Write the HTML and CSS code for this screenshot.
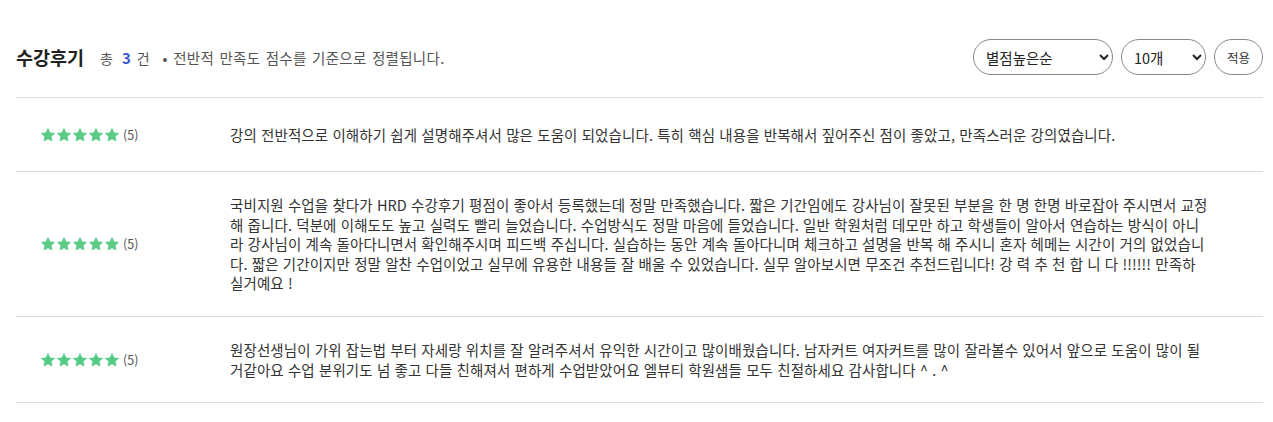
FILE: index.html
```html
<!DOCTYPE html>
<html lang="ko">
<head>
<meta charset="utf-8">
<link rel="stylesheet" href="styles.css">
</head>
<body>
<svg width="0" height="0" class="defs" aria-hidden="true">
  <defs>
    <symbol id="star" viewBox="0 0 24 24">
      <path d="M12 1.2l3.3 6.9 7.5 1-5.5 5.2 1.4 7.5L12 18.2l-6.7 3.6 1.4-7.5-5.5-5.2 7.5-1z"/>
    </symbol>
  </defs>
</svg>
<div class="review">
  <div class="review-head">
    <div class="head-left">
      <h2 class="title">수강후기</h2>
      <span class="count">총 <b>3</b> 건</span>
      <span class="note">• 전반적 만족도 점수를 기준으로 정렬됩니다.</span>
    </div>
    <div class="head-right">
      <select class="sel sel-sort"><option>별점높은순</option></select>
      <select class="sel sel-num"><option>10개</option></select>
      <button class="apply">적용</button>
    </div>
  </div>
  <ul class="list">
    <li class="item">
      <div class="score">
        <span class="stars"><svg><use href="#star"/></svg><svg><use href="#star"/></svg><svg><use href="#star"/></svg><svg><use href="#star"/></svg><svg><use href="#star"/></svg></span><span class="num">(5)</span>
      </div>
      <p class="text">강의 전반적으로 이해하기 쉽게 설명해주셔서 많은 도움이 되었습니다. 특히 핵심 내용을 반복해서 짚어주신 점이 좋았고, 만족스러운 강의였습니다.</p>
    </li>
    <li class="item">
      <div class="score">
        <span class="stars"><svg><use href="#star"/></svg><svg><use href="#star"/></svg><svg><use href="#star"/></svg><svg><use href="#star"/></svg><svg><use href="#star"/></svg></span><span class="num">(5)</span>
      </div>
      <p class="text">국비지원 수업을 찾다가 HRD 수강후기 평점이 좋아서 등록했는데 정말 만족했습니다. 짧은 기간임에도 강사님이 잘못된 부분을 한 명 한명 바로잡아 주시면서 교정 해 줍니다. 덕분에 이해도도 높고 실력도 빨리 늘었습니다. 수업방식도 정말 마음에 들었습니다. 일반 학원처럼 데모만 하고 학생들이 알아서 연습하는 방식이 아니라 강사님이 계속 돌아다니면서 확인해주시며 피드백 주십니다. 실습하는 동안 계속 돌아다니며 체크하고 설명을 반복 해 주시니 혼자 헤메는 시간이 거의 없었습니다. 짧은 기간이지만 정말 알찬 수업이었고 실무에 유용한 내용들 잘 배울 수 있었습니다. 실무 알아보시면 무조건 추천드립니다! 강 력 추 천 합 니 다 !!!!!! 만족하실거예요 !</p>
    </li>
    <li class="item">
      <div class="score">
        <span class="stars"><svg><use href="#star"/></svg><svg><use href="#star"/></svg><svg><use href="#star"/></svg><svg><use href="#star"/></svg><svg><use href="#star"/></svg></span><span class="num">(5)</span>
      </div>
      <p class="text">원장선생님이 가위 잡는법 부터 자세랑 위치를 잘 알려주셔서 유익한 시간이고 많이배웠습니다. 남자커트 여자커트를 많이 잘라볼수 있어서 앞으로 도움이 많이 될거같아요 수업 분위기도 넘 좋고 다들 친해져서 편하게 수업받았어요 엘뷰티 학원샘들 모두 친절하세요 감사합니다 ^ . ^</p>
    </li>
  </ul>
</div>
</body>
</html>
```
FILE: styles.css
```css
* { box-sizing: border-box; }
body {
  margin: 0;
  background: #fff;
  font-family: "Noto Sans CJK KR", "Noto Sans", sans-serif;
  color: #333;
}
.defs {
  position: absolute;
  width: 0;
  height: 0;
}
.review {
  margin: 0 10px 0 16px;
  padding-top: 38px;
}
.review-head {
  display: flex;
  justify-content: space-between;
  align-items: center;
  padding-bottom: 21px;
  border-bottom: 1px solid #dcdcdc;
}
.head-left {
  display: flex;
  align-items: center;
}
.title {
  margin: 0 16px 0 0;
  font-size: 18.5px;
  font-weight: 700;
  color: #222;
  line-height: 38px;
}
.count {
  font-size: 14px;
  color: #555;
  margin-right: 13px;
}
.count b {
  color: #3b57d0;
  font-weight: 700;
  margin: 0 2px 0 5px;
  font-size: 15px;
}
.note {
  font-size: 14.5px;
  letter-spacing: 0.3px;
  word-spacing: 1px;
  color: #555;
}
.head-right {
  display: flex;
  align-items: center;
  gap: 8px;
}
.sel {
  height: 36px;
  border: 1px solid #888;
  border-radius: 18px;
  background: #fff;
  font-family: "Noto Sans CJK KR", sans-serif;
  font-size: 14.5px;
  color: #222;
  padding: 0 4px 0 8px;
}
.sel-sort { width: 140px; }
.sel-num { width: 85px; }
.apply {
  height: 36px;
  width: 49px;
  border: 1px solid #888;
  border-radius: 18px;
  background: #fff;
  font-family: "Noto Sans CJK KR", sans-serif;
  font-size: 12.5px;
  color: #333;
  padding: 0;
}
.list {
  list-style: none;
  margin: 0;
  padding: 0;
}
.item {
  display: flex;
  align-items: center;
  min-height: 74px;
  padding: 23px 0;
  border-bottom: 1px solid #dcdcdc;
}
.score {
  width: 214px;
  flex: none;
  padding-left: 24px;
  display: flex;
  align-items: center;
}
.stars {
  display: flex;
  fill: #5acb87;
}
.stars svg {
  width: 16px;
  height: 16px;
}
.num {
  font-size: 12.5px;
  color: #555;
  margin-left: 3px;
}
.text {
  margin: 0;
  flex: 1;
  font-size: 14.5px;
  letter-spacing: 0.1px;
  line-height: 19.6px;
  color: #333;
  padding-right: 54.5px;
  word-break: break-all;
}
```
